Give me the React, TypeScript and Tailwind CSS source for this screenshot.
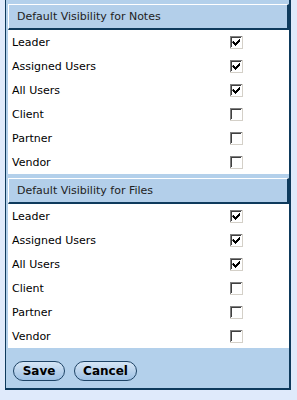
import React from "react";

const Check = ({ checked }: { checked: boolean }) => (
  <svg width="13" height="13" viewBox="0 0 13 13" className="block">
    <rect x="0" y="0" width="13" height="13" fill="#d4d0c8" />
    <rect x="0" y="0" width="12" height="1" fill="#808080" />
    <rect x="0" y="0" width="1" height="12" fill="#808080" />
    <rect x="1" y="1" width="11" height="11" fill="#ffffff" />
    <rect x="1" y="1" width="10" height="1" fill="#404040" />
    <rect x="1" y="1" width="1" height="10" fill="#404040" />
    <rect x="2" y="2" width="9" height="9" fill="#ffffff" />
    {checked && (
      <path
        d="M3 5h1v1h1v1h1v-1h1v-1h1v-1h1v-1h1v3h-1v1h-1v1h-1v1h-1v1h-1v-1h-1v-1h-1v-1h-1z"
        fill="#000"
      />
    )}
  </svg>
);

const Section = ({ title, values }: { title: string; values: boolean[] }) => {
  const labels = ["Leader", "Assigned Users", "All Users", "Client", "Partner", "Vendor"];
  return (
    <div className="pt-[4px] pl-[2px]">
      <div className="h-[26px] bg-[#b3cfea] border-t border-l border-t-white border-l-white border-r-2 border-b-2 border-r-[#0e3a5c] border-b-[#0e3a5c] flex items-center pl-[8px] pt-[2px] text-[11px] text-[#222]">
        {title}
      </div>
      <div className="bg-white">
        {labels.map((l, i) => (
          <div key={l} className="h-[24px] flex items-center text-[11px] text-black">
            <div className="w-[222px] pl-[4px] pt-[3px]">{l}</div>
            <Check checked={values[i]} />
          </div>
        ))}
      </div>
    </div>
  );
};

export default function App() {
  return (
    <div
      className="w-[297px] h-[400px] bg-[#dfeafb] overflow-hidden"
      style={{ fontFamily: '"DejaVu Sans", Verdana, sans-serif' }}
    >
      <div className="ml-[5px] w-[286px] h-[390px] bg-[#b3d0eb] border-l border-r-2 border-b-2 border-[#0e3a5c]">
        <Section title="Default Visibility for Notes" values={[true, true, true, false, false, false]} />
        <Section title="Default Visibility for Files" values={[true, true, true, false, false, false]} />
        <div className="flex gap-[9px] pt-[13px] pl-[7px]">
          <button className="h-[20px] w-[52px] rounded-full border border-[#1f4466] bg-gradient-to-b from-[#d6e6f6] to-[#9dc0e3] text-[12px] font-bold text-black leading-none">
            Save
          </button>
          <button className="h-[20px] w-[63px] rounded-full border border-[#1f4466] bg-gradient-to-b from-[#d6e6f6] to-[#9dc0e3] text-[12px] font-bold text-black leading-none">
            Cancel
          </button>
        </div>
      </div>
    </div>
  );
}
